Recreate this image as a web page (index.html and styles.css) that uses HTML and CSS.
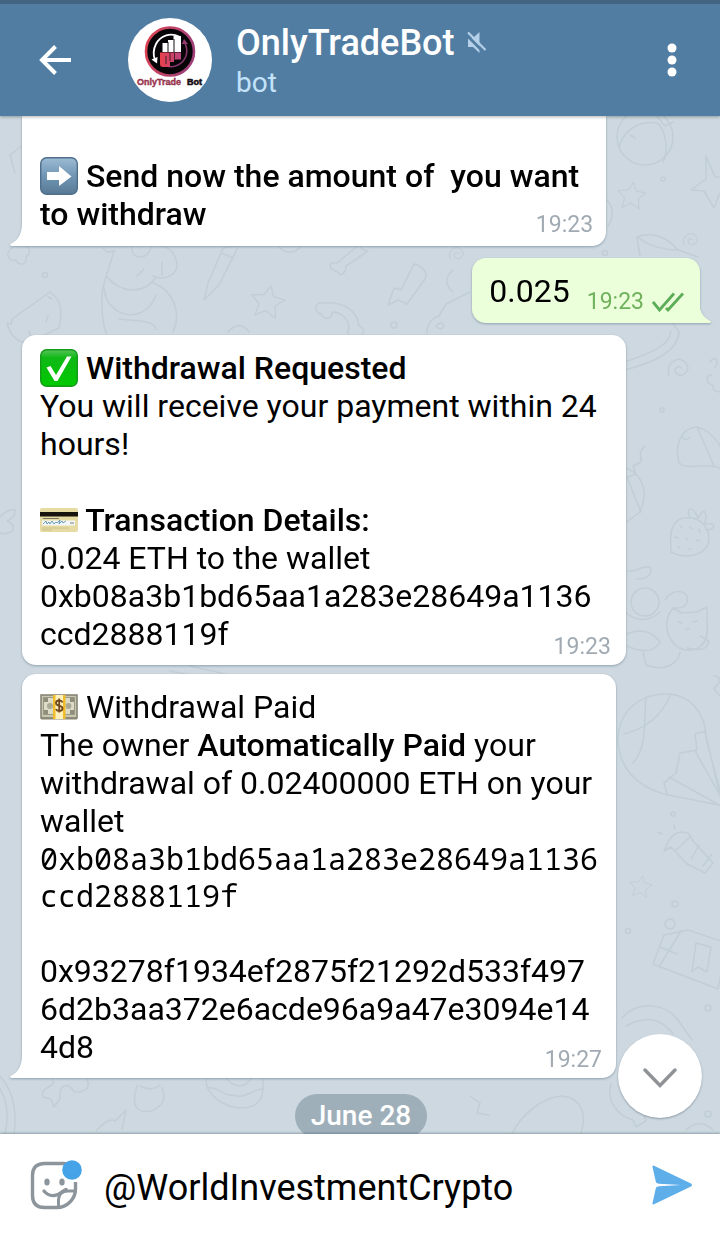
FILE: index.html
```html
<!DOCTYPE html>
<html lang="en">
<head>
<meta charset="utf-8">
<meta name="viewport" content="width=device-width, initial-scale=1">
<title>OnlyTradeBot</title>
<link rel="stylesheet" href="styles.css">
</head>
<body>
<div class="app">
  <header class="header">
    <button class="icon-button back" type="button" aria-label="Back">
      <svg width="32" height="30" viewBox="0 0 32 30" fill="none" stroke="#fff" stroke-width="4"><path d="M32 15H3M16.500 1.500L3 15l13.500 13.500"/></svg>
    </button>
    <svg class="avatar" viewBox="0 0 84 84" role="img" aria-label="OnlyTradeBot logo">
      <defs>
        <linearGradient id="ring" x1="0" y1="0" x2="1" y2="0.3"><stop offset="0" stop-color="#e04450"/><stop offset="1" stop-color="#a04078"/></linearGradient>
        <linearGradient id="bars" x1="0" y1="0" x2="1" y2="0"><stop offset="0" stop-color="#e8404e"/><stop offset="1" stop-color="#b8457c"/></linearGradient>
      </defs>
      <circle cx="42" cy="42" r="42" fill="#fff"/>
      <circle cx="42" cy="33.500" r="24" fill="#080508" stroke="url(#ring)" stroke-width="2.600"/>
      <path d="M51 18.500C42 14 32 18 28 26c-3 6-3 11-1 16" fill="none" stroke="#fff" stroke-width="1.800"/>
      <path d="M23.500 41.500l5.500 4 .5-6.500z" fill="#fff"/>
      <path d="M57 25c4 9 1 18-7 22-4 2-9 2-12 0" fill="none" stroke="#87366b" stroke-width="1.600"/>
      <path d="M54 26l2-5 4 5z" fill="#943d72"/>
      <path d="M34.500 25h5.500v-3h5.500v-4h7.500v16H34.500z" fill="#fff"/>
      <path d="M40 24v10M46 21v13" stroke="#111" stroke-width="1"/>
      <path d="M32 34.500h21v7H46V44h-4v5h-7q-3 0-3-3z" fill="url(#bars)"/>
      <path d="M38 38v8M42 35v8M46.500 35v7" stroke="#45202e" stroke-width="1"/>
      <text class="logo-text" x="9" y="67" fill="#b33c58" stroke="#7c2740" stroke-width="0.400">OnlyTrade</text>
      <text class="logo-text" x="74" y="67" text-anchor="end" fill="#170b12" stroke="#170b12" stroke-width="0.600">Bot</text>
    </svg>
    <div class="peer">
      <h1 class="peer-name">OnlyTradeBot
        <svg width="20" height="22" viewBox="0 0 20 22" aria-label="Muted"><path fill="#b5d0e8" d="M1 6h5l6.500-6v21L6 15H1z"/><path d="M-1 2.500L17 20.500" stroke="#527da3" stroke-width="3"/><path d="M1 .5L18.500 18" stroke="#b5d0e8" stroke-width="2.200"/></svg>
      </h1>
      <p class="peer-status">bot</p>
    </div>
    <button class="icon-button menu" type="button" aria-label="More options">
      <svg width="10" height="34" viewBox="0 0 10 34" fill="#fff"><circle cx="5" cy="5" r="4.500"/><circle cx="5" cy="17" r="4.500"/><circle cx="5" cy="29" r="4.500"/></svg>
    </button>
  </header>

  <main class="chat">
    <svg class="wallpaper" viewBox="0 0 720 1018" preserveAspectRatio="xMidYMin slice" aria-hidden="true">
      <defs>
        <path id="star" d="M0-17l5 11 13 1-9 9 3 13-12-6-11 7 2-13-10-8 13-3z"/>
        <path id="swirl" d="M2 1c-3-4-9 2-4 6 7 4 14-4 9-11C0-13-14-4-10 8"/>
      </defs>
      <g fill="none" stroke="#c2ced5" stroke-width="1.500" stroke-linejoin="round" stroke-linecap="round">
        <circle cx="645" cy="21" r="28"/><path d="M619 31C624 12 643 3 659 8c8 12 9 28 4 38M657 0l8 10 8-4M630 19l5 3"/>
        <use href="#star" transform="translate(632 79) rotate(8) scale(.75)"/>
        <path d="M706 40l9 21 18-1-14 19-5 13-10-17-13-1 15-11zM661 63a2 2 0 104 0 2 2 0 10-4 0"/>
        <path d="M607 84q10 11 1 26M637 122l3 18M637 121c16-6 31 1 41 13M638 121c10 9 26 13 40 13l20 7"/>
        <use href="#swirl" transform="translate(691 123) scale(.7)"/>
        <path d="M22 30l-12 9 5 18M29 130l-7-8M12 132c-8 6-3 14 4 12 3 7 12 4 10-3 6-4 3-12-2-11"/>
        <circle cx="45" cy="159" r="2.500"/>
        <path d="M11 208l1-5 38-27c11 8 13 19 9 36l-32 15c-10-1-17-8-20-20zM29 215l2 6M46 206l2-6M48 181l4 2"/>
        <path d="M114 135l-9 29c-5 14-4 40 2 56M106 160c15 18 38 19 50 1M153 167c20 7 29 29 20 49M104 172c2 30 41 38 52 7M119 203c18 2 35 1 37 10M160 130c10 0 17 10 17 20-1 10-14 15-24 10M137 160l7-7M103 132l4 4 8-1M132 128c-3 20 21 15 19-1M162 146v13"/>
        <path d="M223 132l-15 35-4 17 15-15 20-40zM221 137l12 5"/>
        <use href="#star" transform="translate(268 185) rotate(12) scale(.9)"/>
        <path d="M278 130c8 9 18 7 23 0M331 147c-4 8 8 7 9 12 6-2 6-6 6-9l22-15c-6 0-8-3-8-7l-23 19z"/>
        <path d="M322 187c-8-1-8 10-1 11 2 6 12 6 11-2 10 0 17 8 17 16-4 6 2 10 7 7 8 3 11-6 3-9-2-17-17-25-37-23z"/>
        <path d="M228 216q12-13 21 0"/><circle cx="394" cy="209" r="3"/>
        <path d="M388 189l6-17 7 2 13-26c9 2 14 9 11 15l-18 25-9-4zM427 218c-1-9 5-16 12-18l7-12 24-12M453 154c-9 7-7 17 0 22M436 210q6-6 8 0q-3 6-8 0"/>
        <use href="#swirl" transform="translate(457 137) scale(.7)"/>
        <circle cx="605" cy="137" r="2.500"/>
        <path d="M625 254c30-8 52-18 54-38l-7-10M625 246c25-9 44-15 46-31"/>
        <use href="#swirl" x="679" y="251"/>
        <path d="M710 246c5-8 10 0 5 5M712 259c-7-1-6 9 1 10 0 8 8 9 10 2"/>
        <path d="M679 347c-5-18 2-35 18-36 15 4 28 18 30 45-19-13-37 0-48-9zM697 311l17 39M682 321q4 5 8 0"/>
        <path d="M645 330c-8 7-3 10-4 16l-8 4 3 8-8 3M626 352c18 7 23 27 13 45l-14 10M627 361l14 35"/>
        <circle cx="662" cy="294" r="2"/>
        <path d="M680 403c19-5 30 8 29 22-3 14-22 19-38 11-1-17-1-27 9-33zM690 402c-6-12 5-12 8 1 6-15 11-4 6 5 15-2 11 6 2 6"/>
        <path d="M680 410l2 2M690 411l2 2M699 413l1 3M675 421l3 1M686 422l1 2M696 424l3 1M678 431l2 1M689 433l2 0"/>
        <circle cx="645" cy="486" r="14"/>
        <path d="M627 455c12 1 15-6 23-4 3 8-3 12-13 12M665 484c8-14 26-9 22 2-2 7-9 6-14 6M673 492l9 5 15-1 10-5 0 17c3 21-12 31-28 24-13-9-17-27-6-40zM700 520l9 5c-3 12-13 8-22 7M627 518c14-7 27-1 33 8-6 12-22 9-33 4M643 536l3 13c20 8 33-3 34-13M625 496q18 15 35 0M678 506l4 1M686 513l3 0M693 506l4-1"/>
        <path d="M714 560q5 0 6 5l-6 8 8 9"/>
        <path d="M618 625c0-30 22-47 47-47 26 0 41 20 41 44l18 68-60-12c-28-8-45-27-46-53zM646 581c-3 30 2 48-13 66M671 578c-10 23-25 34-47 40M706 615l-11 3 2 16-17 3-4 20-12 10 3 11M706 620l16 68M695 635l30 53M669 661l52 29"/>
        <circle cx="673" cy="698" r="2"/>
        <path d="M664 735c6-15 12-22 24-18l6 9 19 21-8 10-18-9-16-17zM675 735l16-15M691 743l8-14M703 750l9-12M658 716l4 2M674 709l1 4"/>
        <use href="#star" transform="translate(641 770) rotate(10) scale(.6)"/>
        <circle cx="675" cy="788" r="3"/><circle cx="628" cy="815" r="2.500"/><circle cx="670" cy="808" r="5"/>
        <path d="M664 819l24-5 39 13-9 46-65-25zM681 815l-21 34M660 831l17 7M696 827l15 4-4 25-9-5-6 5zM622 902c15-18 45-16 58 5l12 17M626 910c23-13 37-5 47 8"/>
        <circle cx="708" cy="892" r="3"/><circle cx="708" cy="998" r="3"/>
        <path d="M611 968c-5 17 7 32 22 36l3 7 10-6-3-11M512 1018c8-18 30-37 50-38 20 2 25 18 19 38M686 1014q14-13 27 0"/>
        <path d="M0 960c14 16 17 36 14 58M0 973c7 12 9 27 5 45M53 963c3 10-14 7-10 18l8 2 3 8 6-8c-2-14 8-18 14-7 11 0 17-3 13-13M137 970q-9 29 14 25 18-7 11-23M140 970q11 6 20-1M206 960c-2 19 18 32 37 32 16-1 23-10 19-32M207 972c13-2 15 9 27 7 10 5 17-5 28-6M224 960q17 20 29 0"/>
        <path d="M96 1015c11-12 17-12 19-10l11-11-4 19M470 980l10 7-3 10 12 2"/>
        <path d="M0 401q8-9 15-7 1 7-8 11 8 3 6 10-8 4-13 2M170 555l32 6M190 550l40 9"/>
      </g>
    </svg>

    <div class="messages">
      <article class="bubble bubble-in bubble-continued">
        <p class="text"><br><b><svg class="emoji" viewBox="0 0 38 38" role="img" aria-label="Right arrow"><defs><linearGradient id="blue" x1="0" y1="0" x2="0" y2="1"><stop offset="0" stop-color="#9dbbd4"/><stop offset=".5" stop-color="#7096b5"/><stop offset="1" stop-color="#587995"/></linearGradient></defs><rect x=".7" y=".7" width="36.600" height="36.600" rx="6" fill="url(#blue)" stroke="#506f8a" stroke-width="1.400"/><path d="M7 15h12V9l12.500 10.500L19 29v-6H7z" fill="#fff"/></svg> Send now the amount of&nbsp; you want<br>to withdraw</b></p>
        <time class="time">19:23</time>
        <svg class="tail tail-left" viewBox="0 0 12 24" aria-hidden="true"><path d="M12 0C12 11 9 18 .5 22q-1 2 1.500 2h10z" fill="#fff"/></svg>
      </article>

      <article class="bubble bubble-out">
        <p class="text">0.025</p>
        <span class="receipt"><time class="time">19:23</time>
          <svg width="32" height="20" viewBox="0 0 32 20" fill="none" stroke="#5cad57" stroke-width="2.800" aria-label="Read"><path d="M1 10l6.500 8L22 1.500M14 16l2 2L31 1.500"/></svg>
        </span>
        <svg class="tail tail-right" viewBox="0 0 12 24" aria-hidden="true"><path d="M0 0C0 11 3 18 11.500 22q1 2-1.500 2H0z" fill="#ecffdb"/></svg>
      </article>

      <article class="bubble bubble-in bubble-roomy">
        <p class="text"><b><svg class="emoji" viewBox="0 0 38 38" role="img" aria-label="Check mark"><defs><linearGradient id="green" x1="0" y1="0" x2="0" y2="1"><stop offset="0" stop-color="#58c45b"/><stop offset=".22" stop-color="#10b816"/><stop offset="1" stop-color="#00c900"/></linearGradient></defs><rect x=".7" y=".7" width="36.600" height="36.600" rx="6" fill="url(#green)" stroke="#159a1b" stroke-width="1.400"/><path d="M6.500 18.500l4-1.500 5.500 9L27 7.500h4.500L17.500 32h-3z" fill="#fff"/></svg> Withdrawal Requested</b><br>You will receive your payment within 24<br>hours!<br><br><b><svg class="emoji" viewBox="0 0 38 38" role="img" aria-label="Credit card"><rect x="0" y="7" width="38" height="24" rx="2" fill="#e6dba3"/><path d="M0 11h38v4.500H0z" fill="#17130d"/><path d="M2 19.500h33v5H2z" fill="#f4f7fa"/><path d="M3 23l3-3 1 3 2-2 1 2 2-3 2 3 2-2 1 1 3-3-1 4 3-3 1 2 3-2" fill="none" stroke="#5d91b2" stroke-width=".9"/><path d="M30 22h4M3 17.500h16" stroke="#605d54" stroke-width=".8"/><path d="M2 27h27M2 29h10" stroke="#c5bc87" stroke-width=".8"/></svg> Transaction Details:</b><br>0.024 ETH to the wallet<br>0xb08a3b1bd65aa1a283e28649a1136<br>ccd2888119f</p>
        <time class="time">19:23</time>
      </article>

      <article class="bubble bubble-in bubble-snug">
        <p class="text"><svg class="emoji" viewBox="0 0 38 38" role="img" aria-label="Banknotes"><rect x="1" y="7" width="36" height="23" fill="#c9c7b0" stroke="#817f70" stroke-width="1.500"/><rect x="3.500" y="9.500" width="31" height="17" fill="#dddbc6" stroke="#9a9886" stroke-width="1"/><path d="M4 10h4v4H4zM4 22h4v4H4zM30 10h4v4h-4zM30 22h4v4h-4z" fill="#8f8e7b"/><circle cx="10" cy="18" r="3" fill="#aaa995"/><circle cx="28.500" cy="18" r="3" fill="#aaa995"/><path d="M1 29.500h36v2H1z" fill="#8b8875"/><path d="M13 7h12v24H13z" fill="#fff1bd"/><path d="M13 7h2.500v24H13zM23 7h2.500v24H23z" fill="#f2bd28"/><path d="M22.500 14.500c-1-3-6.500-2.500-6.500.5 0 4 6.500 2 6.500 5.500 0 3-5.500 3.500-6.500.5M19.200 10.500v14" fill="none" stroke="#70471f" stroke-width="1.800"/></svg> Withdrawal Paid<br>The owner <b>Automatically Paid</b> your<br>withdrawal of 0.02400000 ETH on your<br>wallet<br><code class="hash">0xb08a3b1bd65aa1a283e28649a1136<br>ccd2888119f</code><br>0x93278f1934ef2875f21292d533f497<br>6d2b3aa372e6acde96a9a47e3094e14<br>4d8</p>
        <time class="time">19:27</time>
        <svg class="tail tail-left" viewBox="0 0 12 24" aria-hidden="true"><path d="M12 0C12 11 9 18 .5 22q-1 2 1.500 2h10z" fill="#fff"/></svg>
      </article>

      <div class="date">June 28</div>
    </div>

    <button class="scroll-down" type="button" aria-label="Scroll to latest">
      <svg width="36" height="20" viewBox="0 0 36 20" fill="none" stroke="#8f9397" stroke-width="3.400" stroke-linecap="round"><path d="M3 2l15 15.500L33 2"/></svg>
    </button>
  </main>

  <form class="composer">
    <button class="icon-button stickers" type="button" aria-label="Stickers">
      <svg width="52" height="50" viewBox="0 0 52 50" fill="none" stroke="#8d959c" stroke-width="3.400"><path d="M45.500 22v7C45.500 39 37 47.500 27 47.500H14.500q-12 0-12-12v-20q0-12 12-12h19q9 0 11 8"/><path d="M28.500 47V39.500Q29 31 38 31H45" stroke-width="3"/><path d="M14 31c5 6 12 6 18 1l4-2.500" stroke-linecap="round"/><ellipse cx="17" cy="22" rx="2.700" ry="3.500" fill="#8d959c" stroke="none"/><ellipse cx="32" cy="22" rx="2.700" ry="3.500" fill="#8d959c" stroke="none"/><circle cx="42" cy="10" r="9.800" fill="#46a3e8" stroke="none"/></svg>
    </button>
    <input class="message-input" type="text" aria-label="Message" value="@WorldInvestmentCrypto">
    <button class="icon-button send" type="submit" aria-label="Send">
      <svg width="40" height="40" viewBox="0 0 40 40" fill="#5eaeea"><path d="M1.500.5L39 18.500q2 1.500 0 3L1.500 39.500Q.3 39.500.5 38L4 22.500q1-1 3-1.200L29 20 7 18.700q-2-.2-3-1.200L.5 2Q.3.500 1.500.5z"/></svg>
    </button>
  </form>
</div>
</body>
</html>
```

FILE: styles.css
```css
* {
  box-sizing: border-box;
}

body {
  margin: 0;
  font-family: Roboto, "Liberation Sans", sans-serif;
  font-size: 32px;
  line-height: 38px;
  color: #000;
}

h1,
p {
  margin: 0;
}

b {
  font-weight: 500;
}

button {
  font: inherit;
}

.app {
  display: flex;
  flex-direction: column;
  height: 100vh;
}

.header {
  display: flex;
  align-items: center;
  flex: none;
  padding: 14px 24px 14px 30px;
  border-top: 4px solid #426482;
  background: #527da3;
  box-shadow: 0 1px 3px rgba(0, 0, 0, 0.3);
  z-index: 1;
}

.icon-button {
  display: flex;
  align-items: center;
  justify-content: center;
  flex: none;
  padding: 0;
  border: 0;
  background: none;
}

.back {
  width: 50px;
  height: 50px;
}

.avatar {
  flex: none;
  width: 84px;
  height: 84px;
  margin-left: 48px;
}

.logo-text {
  font: 700 9px "Liberation Sans", sans-serif;
}

.peer {
  flex: 1;
  margin-left: 24px;
  padding-top: 4px;
}

.peer-name {
  display: flex;
  align-items: center;
  gap: 12px;
  font-size: 36px;
  font-weight: 500;
  line-height: 42px;
  color: #fff;
}

.peer-status {
  font-size: 28px;
  line-height: 38px;
  color: #c3e3fa;
}

.menu {
  width: 48px;
  height: 50px;
}

.chat {
  position: relative;
  display: flex;
  flex: 1;
  flex-direction: column;
  min-height: 0;
  overflow: hidden;
  background: #cdd8e0;
}

.wallpaper {
  position: absolute;
  inset: 0;
  width: 100%;
  height: 100%;
}

.messages {
  position: relative;
  display: flex;
  flex-direction: column;
  padding: 0 20px 0 22px;
}

.bubble {
  position: relative;
  display: grid;
  align-self: flex-start;
  flex: none;
  padding: 14px 27px 12px 18px;
  border-radius: 14px;
  background: #fff;
  filter: drop-shadow(0 1px 1px rgba(90, 115, 135, 0.55));
}

.bubble-continued {
  padding-top: 3px;
  padding-bottom: 13px;
  border-radius: 0 0 14px 0;
}

.bubble-roomy {
  padding-right: 29px;
}

.bubble-snug {
  margin-top: 9px;
  padding-right: 18px;
  border-bottom-left-radius: 0;
}

.bubble-out {
  display: flex;
  align-self: flex-end;
  gap: 17px;
  margin: 12px 0;
  padding: 14px 16px 13px 17px;
  border-bottom-right-radius: 0;
  background: #ecffdb;
}

.text,
.bubble > .time {
  grid-area: 1 / 1;
}

.text {
  white-space: nowrap;
}

.time {
  font-size: 23px;
  line-height: 28px;
  color: #a1aab3;
}

.bubble > .time {
  align-self: end;
  justify-self: end;
  margin: 0 -14px -8px 0;
}

.bubble-continued > .time {
  margin-bottom: -6px;
}

.bubble-snug > .time {
  margin-right: -4px;
}

.receipt {
  display: flex;
  align-items: center;
  align-self: flex-end;
  gap: 8px;
  margin-bottom: -6px;
}

.receipt .time {
  color: #70b15c;
}

.emoji {
  width: 38px;
  height: 38px;
  vertical-align: top;
}

.hash {
  display: block;
  font: 30px/37px "Droid Sans Mono", "Noto Sans Mono", "DejaVu Sans Mono", monospace;
}

.tail {
  position: absolute;
  bottom: 0;
  width: 12px;
  height: 24px;
}

.tail-left {
  left: -12px;
}

.tail-right {
  right: -11px;
}

.date {
  align-self: center;
  flex: none;
  margin-top: 16px;
  padding: 3px 16px;
  border-radius: 22px;
  background: #9eafba;
  font-size: 28px;
  font-weight: 500;
  color: #fff;
}

.scroll-down {
  position: absolute;
  right: 18px;
  bottom: 16px;
  display: flex;
  align-items: center;
  justify-content: center;
  width: 84px;
  height: 84px;
  padding: 4px 0 0;
  border: 0;
  border-radius: 50%;
  background: #fff;
  box-shadow: 0 1px 2px rgba(60, 80, 100, 0.45);
}

.composer {
  display: flex;
  align-items: center;
  flex: none;
  height: 100px;
  padding: 2px 28px 0 30px;
  background: #fff;
  box-shadow: 0 -1px 2px rgba(60, 80, 100, 0.4);
  z-index: 1;
}

.message-input {
  flex: 1;
  min-width: 0;
  margin: 6px 16px 0 22px;
  padding: 0;
  border: 0;
  outline: 0;
  background: none;
  font: 36px/44px Roboto, "Liberation Sans", sans-serif;
  color: #000;
}
```
